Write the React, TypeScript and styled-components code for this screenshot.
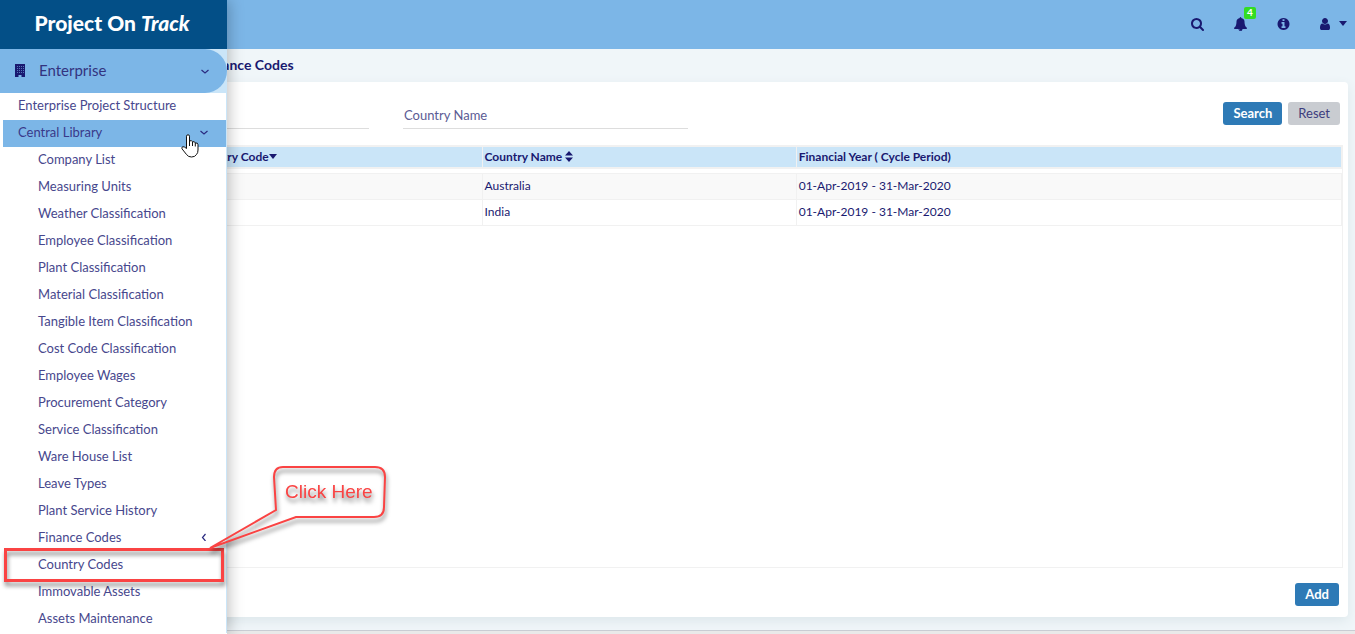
import React from "react";
import styled, { createGlobalStyle } from "styled-components";

const navy = "#191970";
const sky = "#7cb6e7";
const pale = "#cae5f8";
const line = "#f1f1f1";
const red = "#fa4343";

const GlobalStyle = createGlobalStyle`
  * { box-sizing: border-box; }
  body { margin: 0; font-family: Lato, "Liberation Sans", sans-serif; color: ${navy}; background: #f0f6f9; }
  button, input { font-family: inherit; color: inherit; }
  ul { list-style: none; margin: 0; padding: 0; }
`;

const Page = styled.div`
  position: relative;
  display: flex;
  flex-direction: column;
  min-height: 100vh;
  overflow: hidden;
`;

const TopBar = styled.header`
  display: flex;
  align-items: center;
  justify-content: flex-end;
  gap: 30px;
  height: 49px;
  padding: 0 8px 2px 0;
  background: ${sky};
`;

const IconButton = styled.button`
  position: relative;
  display: flex;
  align-items: center;
  gap: 9px;
  padding: 0;
  border: 0;
  background: none;
`;

const Badge = styled.span`
  position: absolute;
  left: 10px;
  top: -10px;
  width: 12px;
  height: 12px;
  border-radius: 2px;
  background: #3d2;
  color: #fff;
  font-size: 10px;
  font-weight: 700;
  line-height: 11px;
  text-align: center;
`;

const Main = styled.main`
  flex: 1;
  display: flex;
  flex-direction: column;
  padding: 0 7px 13px 57px;
`;

const Title = styled.h1`
  margin: 0;
  padding: 0 0 2px 146px;
  font-size: 14px;
  font-weight: 700;
  line-height: 31px;
`;

const Panel = styled.section`
  flex: 1;
  display: flex;
  flex-direction: column;
  padding: 20px 5px 11px 6px;
  border-radius: 4px;
  background: #fff;
  box-shadow: 0 4px 12px #dde7eb;
`;

const Filters = styled.form`
  display: flex;
  align-items: flex-start;
  gap: 34px;
  padding: 0 3px 16px 21px;
`;

const Field = styled.input`
  flex: 0 1 285px;
  min-width: 0;
  height: 27px;
  padding: 0 1px;
  border: 0;
  border-bottom: 1px solid #ddd;
  background: none;
  font-size: 13px;
  outline: 0;
  &::placeholder { color: #5b5b94; opacity: 1; }
`;

const Actions = styled.div`
  display: flex;
  gap: 6px;
  margin-left: auto;
`;

const Button = styled.button<{ $plain?: boolean }>`
  height: 23px;
  padding: 0 10px 1px;
  border: 0;
  border-radius: 3px;
  background: ${(p) => (p.$plain ? "#c9ccd1" : "#2e7ab6")};
  color: ${(p) => (p.$plain ? "#3d3d7e" : "#fff")};
  font-size: 13px;
  font-weight: ${(p) => (p.$plain ? 400 : 700)};
`;

const GridFrame = styled.div`
  flex: 1;
  border: 1px solid ${line};
`;

const Table = styled.table`
  width: 100%;
  table-layout: fixed;
  border-collapse: collapse;
  font-size: 12px;
  line-height: 15px;
`;

const HeadCell = styled.th<{ $width?: string }>`
  width: ${(p) => p.$width || "auto"};
  height: 21px;
  padding: 0 2px 1px;
  border: 1px solid ${line};
  border-width: 1px 1px 2px;
  background: ${pale};
  font-weight: 700;
  text-align: left;
  white-space: nowrap;

  svg { vertical-align: -1px; }
  svg[height="5"] { vertical-align: 2px; }
`;

const Spacer = styled.td`
  height: 6px;
  padding: 0;
`;

const Cell = styled.td`
  height: 26px;
  padding: 0 2px 2px;
  border: 1px solid ${line};
`;

const Row = styled.tr<{ $shaded?: boolean }>`
  background: ${(p) => (p.$shaded ? "#f9f9f9" : "#fff")};
`;

const PanelFooter = styled.div`
  display: flex;
  justify-content: flex-end;
  padding: 15px 4px 0 0;
`;

const StatusBar = styled.footer`
  height: 4px;
  border-top: 1px solid #c9ccd3;
  background: #e9e9e9;
`;

const Sidebar = styled.nav`
  position: absolute;
  inset: 0 auto 0 0;
  width: 227px;
  background: #fff;
  box-shadow: 2px 0 14px rgba(0, 0, 0, 0.25);
`;

const Brand = styled.div`
  height: 49px;
  padding-right: 3px;
  background: #034f87;
  color: #fff;
  font-size: 21px;
  font-weight: 900;
  line-height: 45px;
  text-align: center;
`;

const SectionWrap = styled.div`
  background: ${pale};
`;

const Section = styled.button`
  display: flex;
  align-items: center;
  gap: 14px;
  width: 100%;
  height: 44px;
  padding: 0 18px 1px 15px;
  border: 0;
  border-radius: 0 22px 22px 0;
  background: ${sky};
  font-size: 15px;
  text-align: left;
`;

const SectionName = styled.span`
  flex: 1;
  padding-bottom: 2px;
  color: #33337f;
`;

const MenuList = styled.ul`
  && { padding-left: 3px; }
  border-right: 1px solid ${pale};
`;

const MenuLink = styled.a<{ $level: number; $active?: boolean }>`
  display: flex;
  align-items: center;
  justify-content: space-between;
  height: 27px;
  padding: 0 18px 3px ${(p) => (p.$level === 1 ? 15 : 35)}px;
  background: ${(p) => (p.$active ? sky : "transparent")};
  color: ${(p) => (p.$active ? "#39398a" : "#47478d")};
  font-size: 13px;
  line-height: 16px;
  text-decoration: none;
  white-space: nowrap;
`;

const Highlight = styled.div`
  position: absolute;
  left: 4px;
  top: 548px;
  width: 220px;
  height: 34px;
  border: 3px solid ${red};
  filter: drop-shadow(1px 4px 2px rgba(0, 0, 0, 0.45));
`;

const Callout = styled.svg`
  position: absolute;
  left: 200px;
  top: 460px;
  filter: drop-shadow(1px 4px 2px rgba(0, 0, 0, 0.5));
`;

const Pointer = styled.svg`
  position: absolute;
  left: 181px;
  top: 134px;
`;

const glyphs = {
  search:
    "M1216 832q0-185-131.5-316.5t-316.5-131.5-316.5 131.5-131.5 316.5 131.5 316.5 316.5 131.5 316.5-131.5 131.5-316.5zm512 832q0 52-38 90t-90 38q-54 0-90-38l-343-342q-179 124-399 124-143 0-273.5-55.5t-225-150-150-225-55.5-273.5 55.5-273.5 150-225 225-150 273.5-55.5 273.5 55.5 225 150 150 225 55.5 273.5q0 220-124 399l343 343q37 37 37 90z",
  bell:
    "M912 1696q0-16-16-16-59 0-101.5-42.5t-42.5-101.5q0-16-16-16t-16 16q0 73 51.5 124.5t124.5 51.5q16 0 16-16zm816-288q0 52-38 90t-90 38h-448q0 106-75 181t-181 75-181-75-75-181h-448q-52 0-90-38t-38-90q50-42 91-88t85-119.5 74.5-158.5 50-206 19.5-260q0-152 117-282.5t307-158.5q-8-19-8-39 0-40 28-68t68-28 68 28 28 68q0 20-8 39 190 28 307 158.5t117 282.5q0 139 19.5 260t50 206 74.5 158.5 85 119.5 91 88z",
  info:
    "M1152 1376v-160q0-14-9-23t-23-9h-96v-512q0-14-9-23t-23-9h-320q-14 0-23 9t-9 23v160q0 14 9 23t23 9h96v320h-96q-14 0-23 9t-9 23v160q0 14 9 23t23 9h448q14 0 23-9t9-23zm-128-896v-160q0-14-9-23t-23-9h-192q-14 0-23 9t-9 23v160q0 14 9 23t23 9h192q14 0 23-9t9-23zm640 416q0 209-103 385.5t-279.5 279.5-385.5 103-385.5-103-279.5-279.5-103-385.5 103-385.5 279.5-279.5 385.5-103 385.5 103 279.5 279.5 103 385.5z",
  user:
    "M1536 1399q0 109-62.5 187t-150.5 78h-854q-88 0-150.5-78t-62.5-187q0-85 8.5-160.5t31.5-152 58.5-131 94-89 134.5-34.5q131 128 313 128t313-128q76 0 134.5 34.5t94 89 58.5 131 31.5 152 8.5 160.5zm-256-887q0 159-112.5 271.5t-271.5 112.5-271.5-112.5-112.5-271.5 112.5-271.5 271.5-112.5 271.5 112.5 112.5 271.5z",
};

const Glyph = ({ name }: { name: keyof typeof glyphs }) => (
  <svg
    width={name === "user" ? 10 : 13}
    height="14"
    viewBox={name === "user" ? "256 0 1280 1792" : "64 0 1664 1792"}
    fill={navy}
    aria-hidden="true"
  >
    <path d={glyphs[name]} />
  </svg>
);

const Caret = () => (
  <svg width="8" height="5" viewBox="0 0 8 5" fill={navy} aria-hidden="true">
    <path d="M0 0h8L4 5z" />
  </svg>
);

const SortIcon = () => (
  <svg width="8" height="11" viewBox="0 0 8 11" fill={navy} aria-hidden="true">
    <path d="M0 4.5h8L4 0zM0 6.5h8L4 11z" />
  </svg>
);

const Chevron = ({ left }: { left?: boolean }) => (
  <svg width="8" height="8" viewBox="0 0 8 8" fill="none" stroke="#2b2b80" strokeWidth="1.2" aria-hidden="true">
    <path d={left ? "M5.500 1L2.500 4.500l3 3.500" : "M0.500 3l3.500 3 3.500-3"} />
  </svg>
);

const BuildingIcon = () => (
  <svg width="10" height="13" viewBox="0 0 10 13" aria-hidden="true">
    <path d="M0 0h10v13H6.500v-2h-3v2H0z" fill={navy} />
    <path
      d="M2 2h1v1H2zM4 2h1v1H4zM6 2h1v1H6zM8 2h1v1H8zM2 4h1v1H2zM4 4h1v1H4zM6 4h1v1H6zM8 4h1v1H8zM2 6h1v1H2zM4 6h1v1H4zM6 6h1v1H6zM8 6h1v1H8zM2 8h1v1H2zM4 8h1v1H4zM6 8h1v1H6zM8 8h1v1H8z"
      fill={sky}
      opacity="0.6"
    />
  </svg>
);

const libraryItems = [
  "Company List",
  "Measuring Units",
  "Weather Classification",
  "Employee Classification",
  "Plant Classification",
  "Material Classification",
  "Tangible Item Classification",
  "Cost Code Classification",
  "Employee Wages",
  "Procurement Category",
  "Service Classification",
  "Ware House List",
  "Leave Types",
  "Plant Service History",
  "Finance Codes",
  "Country Codes",
  "Immovable Assets",
  "Assets Maintenance",
];

const countries = ["Australia", "India"];

export default function App() {
  return (
    <Page>
      <GlobalStyle />
      <TopBar>
        <IconButton aria-label="Search"><Glyph name="search" /></IconButton>
        <IconButton aria-label="Notifications"><Glyph name="bell" /><Badge>4</Badge></IconButton>
        <IconButton aria-label="Information"><Glyph name="info" /></IconButton>
        <IconButton aria-label="Account"><Glyph name="user" /><Caret /></IconButton>
      </TopBar>

      <Main>
        <Title>Finance Codes</Title>
        <Panel>
          <Filters onSubmit={(e) => e.preventDefault()}>
            <Field aria-label="Country Code" />
            <Field aria-label="Country Name" placeholder="Country Name" />
            <Actions>
              <Button type="submit">Search</Button>
              <Button type="reset" $plain>Reset</Button>
            </Actions>
          </Filters>
          <GridFrame>
            <Table>
              <thead>
                <tr>
                  <HeadCell $width="10%" />
                  <HeadCell $width="22.7%">Country Code<Caret /></HeadCell>
                  <HeadCell $width="24.6%">Country Name <SortIcon /></HeadCell>
                  <HeadCell>Financial Year ( Cycle Period)</HeadCell>
                </tr>
              </thead>
              <tbody>
                <tr><Spacer colSpan={4} /></tr>
                {countries.map((name, i) => (
                  <Row key={name} $shaded={i === 0}>
                    <Cell />
                    <Cell />
                    <Cell>{name}</Cell>
                    <Cell>01-Apr-2019 - 31-Mar-2020</Cell>
                  </Row>
                ))}
              </tbody>
            </Table>
          </GridFrame>
          <PanelFooter><Button type="button">Add</Button></PanelFooter>
        </Panel>
      </Main>
      <StatusBar />

      <Sidebar>
        <Brand>Project On <em>Track</em></Brand>
        <SectionWrap>
          <Section>
            <BuildingIcon />
            <SectionName>Enterprise</SectionName>
            <Chevron />
          </Section>
        </SectionWrap>
        <MenuList>
          <li><MenuLink href="#" $level={1}>Enterprise Project Structure</MenuLink></li>
          <li>
            <MenuLink href="#" $level={1} $active>Central Library<Chevron /></MenuLink>
            <ul>
              {libraryItems.map((item) => (
                <li key={item}>
                  <MenuLink href="#" $level={2}>{item}{item === "Finance Codes" && <Chevron left />}</MenuLink>
                </li>
              ))}
            </ul>
          </li>
        </MenuList>
      </Sidebar>

      <Highlight />
      <Callout width="200" height="100" viewBox="0 0 200 100">
        <path
          d="M83 7H175Q185 7 185 17L184 47Q184 57 174 57H96L10 88L76 50L74 17Q74 7 83 7Z"
          fill="none"
          stroke={red}
          strokeWidth="2"
        />
        <text x="85" y="38" fill={red} fontFamily="Liberation Sans, sans-serif" fontSize="19">Click Here</text>
      </Callout>
      <Pointer width="18" height="24" viewBox="0 0 18 24" aria-hidden="true">
        <path
          d="M5.5 14.5V2.2Q5.5 0.8 7 0.8T8.5 2.2V7Q10.8 5.8 11.5 7.8Q13.8 7 14.3 9Q16.8 8.4 17 10.7V16Q17 19 15.5 20.5Q14 23 10.5 23Q7.300 23 5.500 20.500L1 14.800Q0.300 13 2 12.700Q3.500 12.700 5.500 14.500ZM8.500 7V12M11.500 8V12M14.300 9V12.500"
          fill="#fff"
          stroke="#111"
        />
      </Pointer>
    </Page>
  );
}
